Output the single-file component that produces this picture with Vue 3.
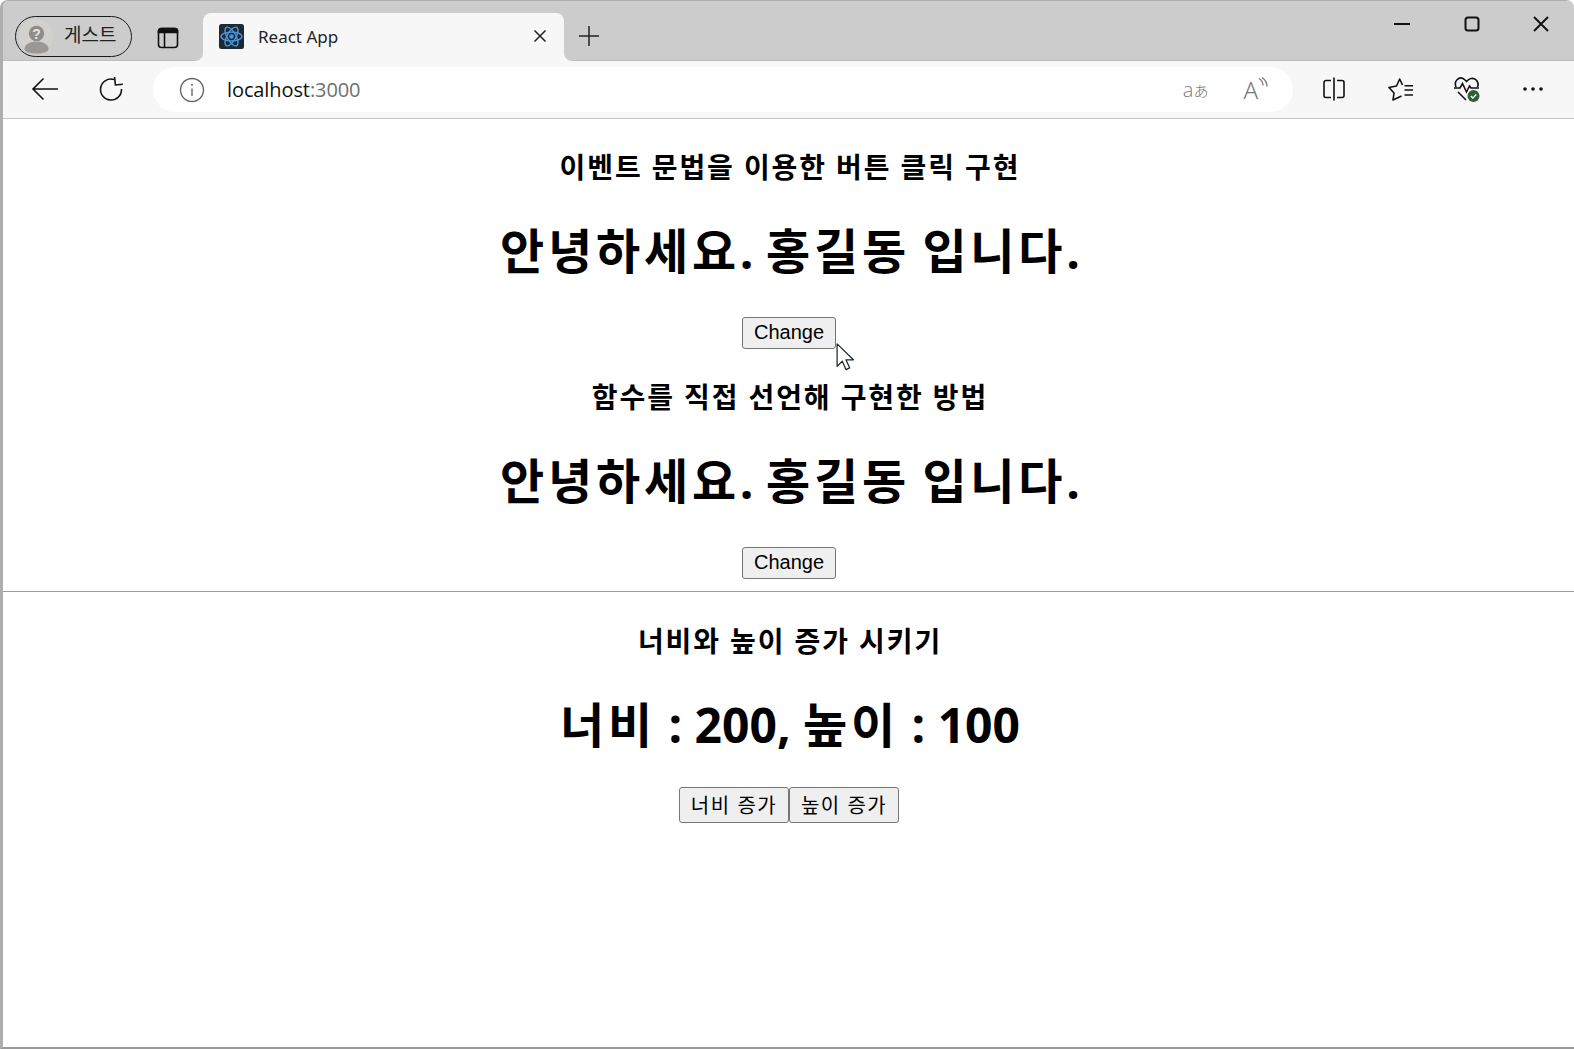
<template>
  <div class="window">
    <div class="titlebar">
      <div class="profile">
        <svg class="avatar" width="40" height="40" viewBox="0 0 40 40">
          <circle cx="20" cy="19" r="17" fill="#d2d1ce" />
          <circle cx="20.500" cy="16.500" r="7.700" fill="#8f8c89" />
          <path d="M8.500 32c0-5 6-7.500 12-7.500s12 2.500 12 7.500c0 3-6 4.500-12 4.500s-12-1.500-12-4.500z" fill="#9a9794" />
          <text x="20.500" y="21.500" class="avatar-q" text-anchor="middle">?</text>
        </svg>
        <span class="profile-name">게스트</span>
      </div>
      <svg class="tabs-icon" width="24" height="24" viewBox="0 0 24 24" fill="none" stroke="#111" stroke-width="1.6">
        <rect x="2.5" y="2.5" width="19" height="19" rx="3" />
        <path d="M2.5 6.5h19V5a2.5 2.5 0 0 0-2.5-2.5H5A2.5 2.5 0 0 0 2.5 5z" fill="#111" />
        <path d="M8.5 6.5v15" />
      </svg>
      <div class="tab">
        <svg class="favicon" width="25" height="25" viewBox="0 0 25 25">
          <rect width="25" height="25" rx="2.5" fill="#1e2a33" />
          <g fill="none" stroke="#4a97df" stroke-width="1.4">
            <ellipse cx="12.5" cy="12.5" rx="10.5" ry="4.4" />
            <ellipse cx="12.5" cy="12.5" rx="10.5" ry="4.4" transform="rotate(60 12.5 12.5)" />
            <ellipse cx="12.5" cy="12.5" rx="10.5" ry="4.4" transform="rotate(120 12.5 12.5)" />
          </g>
          <circle cx="12.5" cy="12.5" r="2.2" fill="#4a97df" />
        </svg>
        <span class="tab-title">React App</span>
        <svg class="tab-close" width="14" height="14" viewBox="0 0 14 14" stroke="#222" stroke-width="1.5">
          <path d="M1.5 1.5l11 11M12.5 1.5l-11 11" />
        </svg>
      </div>
      <svg class="new-tab" width="22" height="22" viewBox="0 0 22 22" stroke="#222" stroke-width="1.5">
        <path d="M11 1v20M1 11h20" />
      </svg>
      <div class="win-controls">
        <svg width="16" height="16" viewBox="0 0 16 16" stroke="#111" stroke-width="2">
          <path d="M0 8h16" />
        </svg>
        <svg width="16" height="16" viewBox="0 0 16 16" fill="none" stroke="#111" stroke-width="2">
          <rect x="1.5" y="1.5" width="13" height="13" rx="2.5" />
        </svg>
        <svg width="16" height="16" viewBox="0 0 16 16" stroke="#111" stroke-width="1.9">
          <path d="M1 1l14 14M15 1L1 15" />
        </svg>
      </div>
    </div>

    <div class="toolbar">
      <svg class="back" width="28" height="24" viewBox="0 0 28 24" fill="none" stroke="#111" stroke-width="1.6">
        <path d="M27 12H2M12.5 1.5L2 12l10.500 10.500" />
      </svg>
      <svg class="reload" width="26" height="26" viewBox="0 0 26 26" fill="none" stroke="#111" stroke-width="1.6">
        <path d="M16 3.500A10.500 10.500 0 1 0 23.500 13" />
        <path d="M17 1v8h7.500" transform="rotate(-6 17 5)" />
      </svg>
      <div class="address">
        <svg width="26" height="26" viewBox="0 0 26 26" fill="none" stroke="#666" stroke-width="1.4">
          <circle cx="13" cy="13" r="11.500" />
          <path d="M13 11.500v7.500" />
          <circle cx="13" cy="7.800" r="1" fill="#666" stroke="none" />
        </svg>
        <span class="url">localhost<span class="port">:3000</span></span>
        <span class="translate">a<span class="translate-ja">あ</span></span>
        <span class="read-aloud">A<svg width="10" height="14" viewBox="0 0 10 14" fill="none" stroke="#777" stroke-width="1.300"><path d="M1 1.500c3 2 4 4 4 7M4 0.500c3 2 5 4.500 5 9" /></svg></span>
      </div>
      <div class="tools">
        <svg width="24" height="24" viewBox="0 0 24 24" fill="none" stroke="#111" stroke-width="1.600">
          <path d="M9 3.500H4a2 2 0 0 0-2 2v13a2 2 0 0 0 2 2h5M15 3.500h5a2 2 0 0 1 2 2v13a2 2 0 0 1-2 2h-5M12 0.500v23" />
        </svg>
        <svg class="fav" width="26" height="24" viewBox="0 0 26 24" fill="none" stroke="#111" stroke-width="1.600">
          <path d="M14.500 8L11.700 2 8.500 9 1 10.500l5 5.500-1 7 8.500-4" stroke-linejoin="round" />
          <path d="M16.500 8.700H25M16.500 13H25M16.500 18H25" />
        </svg>
        <svg class="health" width="28" height="28" viewBox="0 0 28 28" fill="none" stroke="#111" stroke-width="1.600">
          <path d="M3 12C0.500 6 6 1.500 10 3.500c2 1 3 2.500 3.500 3C14 6 15.500 4 18 3.500c5-1 8.500 4 6.500 8.500" />
          <path d="M1 13h6l2.500-4.500 4 8.500 3-6 1.500 2h8" />
          <path d="M5 17l8 8" />
          <circle cx="20.500" cy="21" r="6" fill="#2e5f38" stroke="none" />
          <path d="M17.800 21l2 2 3.500-3.500" stroke="#fff" stroke-width="1.300" />
        </svg>
        <svg width="22" height="6" viewBox="0 0 22 6" fill="#111">
          <circle cx="3" cy="3" r="1.800" />
          <circle cx="11" cy="3" r="1.800" />
          <circle cx="19" cy="3" r="1.800" />
        </svg>
      </div>
    </div>

    <div class="page">
      <section class="demo">
        <h3>이벤트 문법을 이용한 버튼 클릭 구현</h3>
        <h1><span class="ko">안녕하세요</span>. <span class="ko">{{ name }}</span> <span class="ko">입니다</span>.</h1>
        <div class="btn-wrap">
          <button class="btn">Change</button>
          <svg class="cursor" width="19" height="28" viewBox="0 0 20 30">
            <path d="M1 1v24l5.500-5.500 4 9 4-1.800-4-8.700h8z" fill="#fff" stroke="#1b2430" stroke-width="1.300" stroke-linejoin="round" />
          </svg>
        </div>
      </section>
      <section class="demo">
        <h3>함수를 직접 선언해 구현한 방법</h3>
        <h1><span class="ko">안녕하세요</span>. <span class="ko">{{ name }}</span> <span class="ko">입니다</span>.</h1>
        <div class="btn-wrap">
          <button class="btn">Change</button>
        </div>
      </section>
      <hr />
      <section class="demo size-demo">
        <h3>너비와 높이 증가 시키기</h3>
        <h1><span class="ko">너비</span> : {{ width }}, <span class="ko">높이</span> : {{ height }}</h1>
        <div class="btn-wrap">
          <button class="btn btn-ko" @click="width += 10">너비 증가</button><button class="btn btn-ko" @click="height += 10">높이 증가</button>
        </div>
      </section>
    </div>
  </div>
</template>

<script setup>
import { ref } from 'vue'

const name = ref('홍길동')
const width = ref(200)
const height = ref(100)
</script>

<style>
html, body { margin: 0; background: #fff; }
</style>

<style scoped>
.window {
  width: 1574px;
  height: 1049px;
  box-sizing: border-box;
  display: flex;
  flex-direction: column;
  overflow: hidden;
  background: #fff;
  border-left: 3px solid #aeaeae;
  border-bottom: 2px solid #999;
  border-top: 1px solid #aeaeae;
  border-top-left-radius: 8px;
  border-top-right-radius: 8px;
  font-family: "Open Sans", "Noto Sans CJK KR", sans-serif;
}
.titlebar {
  height: 60px;
  flex: none;
  display: flex;
  align-items: flex-end;
  background: #ccc;
  box-shadow: inset 0 -1px #bdbdbd;
}
.profile {
  width: 117px;
  height: 41px;
  box-sizing: border-box;
  margin: 0 0 4px 12px;
  display: flex;
  align-items: center;
  border: 1.500px solid #1a1a1a;
  border-radius: 21px;
}
.avatar { flex: none; }
.avatar-q { font: bold 14px "Liberation Sans", sans-serif; fill: #e6e5e2; }
.profile-name {
  margin: 0 0 4px 8px;
  font-size: 19px;
  line-height: 26px;
  color: #222;
}
.tabs-icon { flex: none; margin: 0 0 11px 24px; }
.tab {
  position: relative;
  width: 361px;
  height: 48px;
  box-sizing: border-box;
  margin-left: 23px;
  padding: 0 17px 2px 16px;
  display: flex;
  align-items: center;
  background: #f7f7f7;
  border-radius: 8px 8px 0 0;
}
.tab::before,
.tab::after {
  content: "";
  position: absolute;
  bottom: 0;
  width: 8px;
  height: 8px;
}
.tab::before {
  left: -8px;
  background: radial-gradient(circle at 0 0, #ccc 7.500px, #f7f7f7 8.500px);
}
.tab::after {
  right: -8px;
  background: radial-gradient(circle at 100% 0, #ccc 7.500px, #f7f7f7 8.500px);
}
.tab-title {
  margin-left: 14px;
  font-family: "Noto Sans", sans-serif;
  font-size: 17px;
  color: #222;
}
.tab-close { margin-left: auto; }
.new-tab { flex: none; margin: 0 0 14px 14px; }
.win-controls {
  margin: 0 0 29px auto;
  padding-right: 25px;
  display: flex;
  gap: 53.500px;
}
.toolbar {
  height: 58px;
  flex: none;
  box-sizing: border-box;
  display: flex;
  align-items: center;
  background: #f7f7f7;
  border-bottom: 1px solid #c6c6c6;
}
.back { flex: none; margin: 0 0 2px 28px; }
.reload { flex: none; margin: 0 0 2px 39px; }
.address {
  width: 1140px;
  height: 45px;
  box-sizing: border-box;
  margin-left: 29px;
  padding: 0 25px 0 26px;
  display: flex;
  align-items: center;
  background: #fff;
  border-radius: 23px;
}
.url {
  margin-left: 22px;
  font-size: 20px;
  letter-spacing: -0.1px;
  color: #111;
}
.port { color: #6f6f6f; }
.translate {
  margin-left: auto;
  font-size: 20px;
  font-weight: 300;
  color: #777;
}
.translate-ja { font-size: 15px; }
.read-aloud {
  margin-left: 35px;
  display: flex;
  font-family: "Noto Sans", sans-serif;
  font-size: 24px;
  font-weight: 300;
  color: #777;
}
.read-aloud svg { margin-top: 4px; }
.tools {
  margin: 0 0 2px 29px;
  display: flex;
  align-items: center;
  gap: 41px;
}
.fav { margin-left: 1px; }
.health { margin-left: -2px; }
.page {
  flex: 1;
  padding-left: 1px;
  text-align: center;
  color: #000;
}
.demo { display: block; }
h3 {
  margin: 28px 0;
  padding-left: 2px;
  font-size: 28px;
  line-height: 40px;
  font-weight: 700;
  letter-spacing: 1.900px;
}
h1 {
  margin: 31px 0 33px;
  padding-left: 2px;
  font-size: 48px;
  line-height: 66px;
  font-weight: 700;
}
.ko { letter-spacing: 3.800px; }
.size-demo h1 {
  margin: 32px 0 30px;
  line-height: 64px;
}
.btn-wrap { position: relative; }
.btn {
  box-sizing: border-box;
  margin: 0;
  padding: 3px 11px 4px;
  font-family: "Liberation Sans", "Noto Sans CJK KR", sans-serif;
  font-size: 20px;
  line-height: 23px;
  color: #000;
  background: #efefef;
  border: 1px solid #767676;
  border-radius: 3px;
  vertical-align: top;
}
.btn-ko {
  padding: 5px 11px 2px;
  line-height: 27px;
  letter-spacing: 1.400px;
}
.cursor {
  position: absolute;
  left: 832px;
  top: 26px;
}
hr {
  margin: 12px 0 29px -1px;
  border: 0;
  border-top: 1px solid #9a9a9a;
}
</style>
